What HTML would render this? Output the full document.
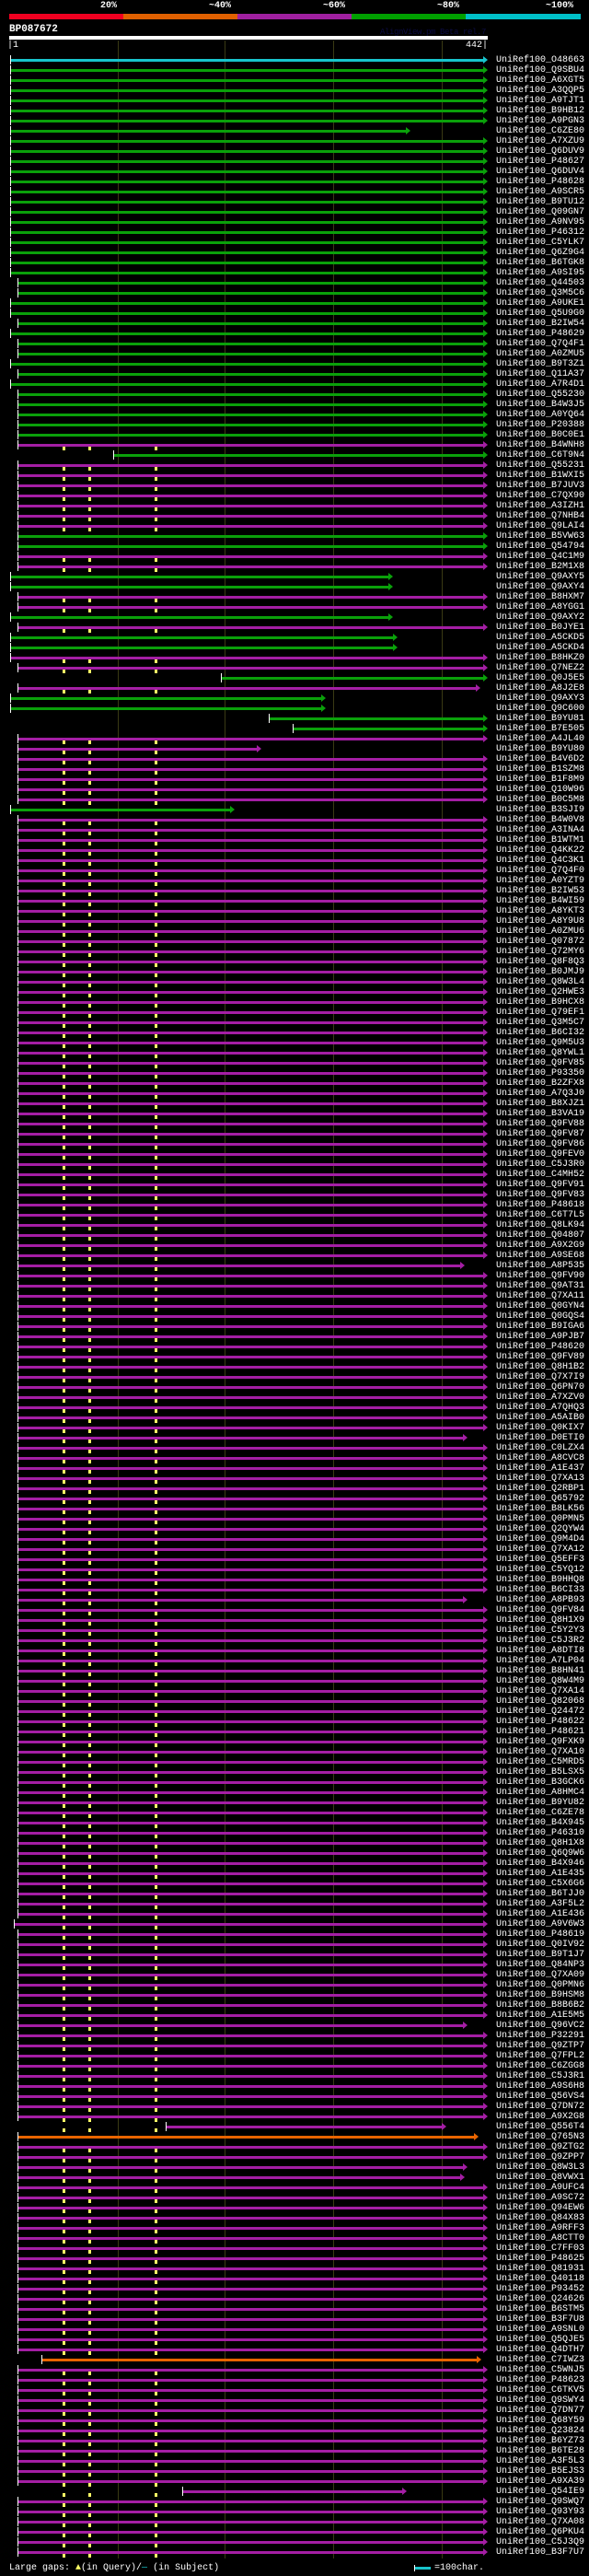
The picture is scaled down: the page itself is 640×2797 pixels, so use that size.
<!DOCTYPE html>
<html><head><meta charset="utf-8"><style>
*{margin:0;padding:0;box-sizing:border-box}
body{width:640px;height:2797px;background:#000;position:relative;overflow:hidden;font-family:"Liberation Mono",monospace;color:#fff}
.abs{position:absolute}
.pct{position:absolute;top:1px;font-size:10px;font-weight:bold;line-height:11px}
.grid{position:absolute;top:44px;height:2734px;width:1px;background:#3a3a14}
#rows{position:absolute;top:60px;left:0;width:640px}
.r{position:relative;height:11px;width:640px}
.r i{position:absolute;top:4px;height:3px;left:19px;width:506px;background:var(--c)}
.r.a i{left:11px;width:514px}
.r i::before{content:'';position:absolute;left:0;top:-4px;width:1px;height:10px;background:#fff}
.r i::after{content:'';position:absolute;left:100%;top:-3px;width:0;height:0;border-left:5px solid var(--c);border-top:4.5px solid transparent;border-bottom:4.5px solid transparent}
.r b{position:absolute;left:539px;top:0;font-weight:normal;font-size:10px;line-height:11px;white-space:pre}
.g{--c:#0aa00a}.m{--c:#a41ea4}.o{--c:#e86400}.c{--c:#18c4cc}
.m::before,.m::after,.m b::before{content:'';position:absolute;top:7px;width:3px;height:4px;background:#ffff66}
.m::before{left:68px}.m::after{left:96px}.m b::before{left:-371px;top:7px}
</style></head><body>
<div class="pct" style="left:109px">20%</div>
<div class="pct" style="left:227px">~40%</div>
<div class="pct" style="left:351px">~60%</div>
<div class="pct" style="left:475px">~80%</div>
<div class="pct" style="left:593px">~100%</div>
<div class="abs" style="left:10px;top:15px;width:124px;height:6px;background:#f00020"></div>
<div class="abs" style="left:134px;top:15px;width:124px;height:6px;background:#e06000"></div>
<div class="abs" style="left:258px;top:15px;width:124px;height:6px;background:#a020a0"></div>
<div class="abs" style="left:382px;top:15px;width:124px;height:6px;background:#00a000"></div>
<div class="abs" style="left:506px;top:15px;width:125px;height:6px;background:#00c0c8"></div>
<div class="abs" style="left:10px;top:26px;font-size:11px;font-weight:bold;line-height:12px">BP087672</div>
<div class="abs" style="left:413px;top:30px;font-size:9px;letter-spacing:-0.4px;line-height:10px;color:#0c0c44">AlignView.pm Beta rel.7</div>
<div class="abs" style="left:10px;top:39px;width:520px;height:4px;background:#fff"></div>
<div class="abs" style="left:8px;top:44px;font-size:10px;line-height:11px">|1</div>
<div class="abs" style="left:506px;top:44px;font-size:10px;line-height:11px">442|</div>
<div class="grid" style="left:128px"></div><div class="grid" style="left:244px"></div><div class="grid" style="left:362px"></div><div class="grid" style="left:480px"></div>
<div id="rows">
<div class="r c a"><i></i><b>UniRef100_O48663</b></div>
<div class="r g a"><i></i><b>UniRef100_Q9SBU4</b></div>
<div class="r g a"><i></i><b>UniRef100_A6XGT5</b></div>
<div class="r g a"><i></i><b>UniRef100_A3QQP5</b></div>
<div class="r g a"><i></i><b>UniRef100_A9TJT1</b></div>
<div class="r g a"><i></i><b>UniRef100_B9HB12</b></div>
<div class="r g a"><i></i><b>UniRef100_A9PGN3</b></div>
<div class="r g a"><i style="width:430px"></i><b>UniRef100_C6ZE80</b></div>
<div class="r g a"><i></i><b>UniRef100_A7XZU9</b></div>
<div class="r g a"><i></i><b>UniRef100_Q6DUV9</b></div>
<div class="r g a"><i></i><b>UniRef100_P48627</b></div>
<div class="r g a"><i></i><b>UniRef100_Q6DUV4</b></div>
<div class="r g a"><i></i><b>UniRef100_P48628</b></div>
<div class="r g a"><i></i><b>UniRef100_A9SCR5</b></div>
<div class="r g a"><i></i><b>UniRef100_B9TU12</b></div>
<div class="r g a"><i></i><b>UniRef100_Q09GN7</b></div>
<div class="r g a"><i></i><b>UniRef100_A9NV95</b></div>
<div class="r g a"><i></i><b>UniRef100_P46312</b></div>
<div class="r g a"><i></i><b>UniRef100_C5YLK7</b></div>
<div class="r g a"><i></i><b>UniRef100_Q6Z9G4</b></div>
<div class="r g a"><i></i><b>UniRef100_B6TGK8</b></div>
<div class="r g a"><i></i><b>UniRef100_A9SI95</b></div>
<div class="r g"><i></i><b>UniRef100_Q44503</b></div>
<div class="r g"><i></i><b>UniRef100_Q3M5C6</b></div>
<div class="r g a"><i></i><b>UniRef100_A9UKE1</b></div>
<div class="r g a"><i></i><b>UniRef100_Q5U9G0</b></div>
<div class="r g"><i></i><b>UniRef100_B2IW54</b></div>
<div class="r g a"><i></i><b>UniRef100_P48629</b></div>
<div class="r g"><i></i><b>UniRef100_Q7Q4F1</b></div>
<div class="r g"><i></i><b>UniRef100_A0ZMU5</b></div>
<div class="r g a"><i></i><b>UniRef100_B9T3Z1</b></div>
<div class="r g"><i></i><b>UniRef100_Q11A37</b></div>
<div class="r g a"><i></i><b>UniRef100_A7R4D1</b></div>
<div class="r g"><i></i><b>UniRef100_Q55230</b></div>
<div class="r g"><i></i><b>UniRef100_B4W3J5</b></div>
<div class="r g"><i></i><b>UniRef100_A0YQ64</b></div>
<div class="r g"><i></i><b>UniRef100_P20388</b></div>
<div class="r g"><i></i><b>UniRef100_B0C0E1</b></div>
<div class="r m"><i></i><b>UniRef100_B4WNH8</b></div>
<div class="r g"><i style="left:123px;width:402px"></i><b>UniRef100_C6T9N4</b></div>
<div class="r m"><i></i><b>UniRef100_Q55231</b></div>
<div class="r m"><i></i><b>UniRef100_B1WXI5</b></div>
<div class="r m"><i></i><b>UniRef100_B7JUV3</b></div>
<div class="r m"><i></i><b>UniRef100_C7QX90</b></div>
<div class="r m"><i></i><b>UniRef100_A3IZH1</b></div>
<div class="r m"><i></i><b>UniRef100_Q7NHB4</b></div>
<div class="r m"><i></i><b>UniRef100_Q9LAI4</b></div>
<div class="r g"><i></i><b>UniRef100_B5VW63</b></div>
<div class="r g"><i></i><b>UniRef100_Q54794</b></div>
<div class="r m"><i></i><b>UniRef100_Q4C1M9</b></div>
<div class="r m"><i></i><b>UniRef100_B2M1X8</b></div>
<div class="r g a"><i style="width:411px"></i><b>UniRef100_Q9AXY5</b></div>
<div class="r g a"><i style="width:411px"></i><b>UniRef100_Q9AXY4</b></div>
<div class="r m"><i></i><b>UniRef100_B8HXM7</b></div>
<div class="r m"><i></i><b>UniRef100_A8YGG1</b></div>
<div class="r g a"><i style="width:411px"></i><b>UniRef100_Q9AXY2</b></div>
<div class="r m"><i></i><b>UniRef100_B0JYE1</b></div>
<div class="r g a"><i style="width:416px"></i><b>UniRef100_A5CKD5</b></div>
<div class="r g a"><i style="width:416px"></i><b>UniRef100_A5CKD4</b></div>
<div class="r m a"><i></i><b>UniRef100_B8HKZ0</b></div>
<div class="r m"><i></i><b>UniRef100_Q7NEZ2</b></div>
<div class="r g"><i style="left:240px;width:285px"></i><b>UniRef100_Q0J5E5</b></div>
<div class="r m"><i style="width:498px"></i><b>UniRef100_A8J2E8</b></div>
<div class="r g a"><i style="width:338px"></i><b>UniRef100_Q9AXY3</b></div>
<div class="r g a"><i style="width:338px"></i><b>UniRef100_Q9C600</b></div>
<div class="r g"><i style="left:292px;width:233px"></i><b>UniRef100_B9YU81</b></div>
<div class="r g"><i style="left:318px;width:207px"></i><b>UniRef100_B7E505</b></div>
<div class="r m"><i></i><b>UniRef100_A4JL40</b></div>
<div class="r m"><i style="width:260px"></i><b>UniRef100_B9YU80</b></div>
<div class="r m"><i></i><b>UniRef100_B4V6D2</b></div>
<div class="r m"><i></i><b>UniRef100_B1SZM8</b></div>
<div class="r m"><i></i><b>UniRef100_B1F8M9</b></div>
<div class="r m"><i></i><b>UniRef100_Q10W96</b></div>
<div class="r m"><i></i><b>UniRef100_B0C5M8</b></div>
<div class="r g a"><i style="width:239px"></i><b>UniRef100_B3SJI9</b></div>
<div class="r m"><i></i><b>UniRef100_B4W0V8</b></div>
<div class="r m"><i></i><b>UniRef100_A3INA4</b></div>
<div class="r m"><i></i><b>UniRef100_B1WTM1</b></div>
<div class="r m"><i></i><b>UniRef100_Q4KK22</b></div>
<div class="r m"><i></i><b>UniRef100_Q4C3K1</b></div>
<div class="r m"><i></i><b>UniRef100_Q7Q4F0</b></div>
<div class="r m"><i></i><b>UniRef100_A0YZT9</b></div>
<div class="r m"><i></i><b>UniRef100_B2IW53</b></div>
<div class="r m"><i></i><b>UniRef100_B4WI59</b></div>
<div class="r m"><i></i><b>UniRef100_A8YKT3</b></div>
<div class="r m"><i></i><b>UniRef100_A8Y9U8</b></div>
<div class="r m"><i></i><b>UniRef100_A0ZMU6</b></div>
<div class="r m"><i></i><b>UniRef100_Q07872</b></div>
<div class="r m"><i></i><b>UniRef100_Q72MY6</b></div>
<div class="r m"><i></i><b>UniRef100_Q8F8Q3</b></div>
<div class="r m"><i></i><b>UniRef100_B0JMJ9</b></div>
<div class="r m"><i></i><b>UniRef100_Q8W3L4</b></div>
<div class="r m"><i></i><b>UniRef100_Q2HWE3</b></div>
<div class="r m"><i></i><b>UniRef100_B9HCX8</b></div>
<div class="r m"><i></i><b>UniRef100_Q79EF1</b></div>
<div class="r m"><i></i><b>UniRef100_Q3M5C7</b></div>
<div class="r m"><i></i><b>UniRef100_B6CI32</b></div>
<div class="r m"><i></i><b>UniRef100_Q9M5U3</b></div>
<div class="r m"><i></i><b>UniRef100_Q8YWL1</b></div>
<div class="r m"><i></i><b>UniRef100_Q9FV85</b></div>
<div class="r m"><i></i><b>UniRef100_P93350</b></div>
<div class="r m"><i></i><b>UniRef100_B2ZFX8</b></div>
<div class="r m"><i></i><b>UniRef100_A7Q3J0</b></div>
<div class="r m"><i></i><b>UniRef100_B8XJZ1</b></div>
<div class="r m"><i></i><b>UniRef100_B3VA19</b></div>
<div class="r m"><i></i><b>UniRef100_Q9FV88</b></div>
<div class="r m"><i></i><b>UniRef100_Q9FV87</b></div>
<div class="r m"><i></i><b>UniRef100_Q9FV86</b></div>
<div class="r m"><i></i><b>UniRef100_Q9FEV0</b></div>
<div class="r m"><i></i><b>UniRef100_C5J3R0</b></div>
<div class="r m"><i></i><b>UniRef100_C4MH52</b></div>
<div class="r m"><i></i><b>UniRef100_Q9FV91</b></div>
<div class="r m"><i></i><b>UniRef100_Q9FV83</b></div>
<div class="r m"><i></i><b>UniRef100_P48618</b></div>
<div class="r m"><i></i><b>UniRef100_C6T7L5</b></div>
<div class="r m"><i></i><b>UniRef100_Q8LK94</b></div>
<div class="r m"><i></i><b>UniRef100_Q04807</b></div>
<div class="r m"><i></i><b>UniRef100_A9X2G9</b></div>
<div class="r m"><i></i><b>UniRef100_A9SE68</b></div>
<div class="r m"><i style="width:481px"></i><b>UniRef100_A8P535</b></div>
<div class="r m"><i></i><b>UniRef100_Q9FV90</b></div>
<div class="r m"><i></i><b>UniRef100_Q9AT31</b></div>
<div class="r m"><i></i><b>UniRef100_Q7XA11</b></div>
<div class="r m"><i></i><b>UniRef100_Q0GYN4</b></div>
<div class="r m"><i></i><b>UniRef100_Q0GQS4</b></div>
<div class="r m"><i></i><b>UniRef100_B9IGA6</b></div>
<div class="r m"><i></i><b>UniRef100_A9PJB7</b></div>
<div class="r m"><i></i><b>UniRef100_P48620</b></div>
<div class="r m"><i></i><b>UniRef100_Q9FV89</b></div>
<div class="r m"><i></i><b>UniRef100_Q8H1B2</b></div>
<div class="r m"><i></i><b>UniRef100_Q7X7I9</b></div>
<div class="r m"><i></i><b>UniRef100_Q6PN70</b></div>
<div class="r m"><i></i><b>UniRef100_A7XZV0</b></div>
<div class="r m"><i></i><b>UniRef100_A7QHQ3</b></div>
<div class="r m"><i></i><b>UniRef100_A5AIB0</b></div>
<div class="r m"><i></i><b>UniRef100_Q0KIX7</b></div>
<div class="r m"><i style="width:484px"></i><b>UniRef100_D0ETI0</b></div>
<div class="r m"><i></i><b>UniRef100_C0LZX4</b></div>
<div class="r m"><i></i><b>UniRef100_A8CVC8</b></div>
<div class="r m"><i></i><b>UniRef100_A1E437</b></div>
<div class="r m"><i></i><b>UniRef100_Q7XA13</b></div>
<div class="r m"><i></i><b>UniRef100_Q2RBP1</b></div>
<div class="r m"><i></i><b>UniRef100_Q65792</b></div>
<div class="r m"><i></i><b>UniRef100_B8LK56</b></div>
<div class="r m"><i></i><b>UniRef100_Q0PMN5</b></div>
<div class="r m"><i></i><b>UniRef100_Q2QYW4</b></div>
<div class="r m"><i></i><b>UniRef100_Q9M4D4</b></div>
<div class="r m"><i></i><b>UniRef100_Q7XA12</b></div>
<div class="r m"><i></i><b>UniRef100_Q5EFF3</b></div>
<div class="r m"><i></i><b>UniRef100_C5YQ12</b></div>
<div class="r m"><i></i><b>UniRef100_B9HHQ8</b></div>
<div class="r m"><i></i><b>UniRef100_B6CI33</b></div>
<div class="r m"><i style="width:484px"></i><b>UniRef100_A8PB93</b></div>
<div class="r m"><i></i><b>UniRef100_Q9FV84</b></div>
<div class="r m"><i></i><b>UniRef100_Q8H1X9</b></div>
<div class="r m"><i></i><b>UniRef100_C5Y2Y3</b></div>
<div class="r m"><i></i><b>UniRef100_C5J3R2</b></div>
<div class="r m"><i></i><b>UniRef100_A8DTI8</b></div>
<div class="r m"><i></i><b>UniRef100_A7LP04</b></div>
<div class="r m"><i></i><b>UniRef100_B8HN41</b></div>
<div class="r m"><i></i><b>UniRef100_Q8W4M9</b></div>
<div class="r m"><i></i><b>UniRef100_Q7XA14</b></div>
<div class="r m"><i></i><b>UniRef100_Q82068</b></div>
<div class="r m"><i></i><b>UniRef100_Q24472</b></div>
<div class="r m"><i></i><b>UniRef100_P48622</b></div>
<div class="r m"><i></i><b>UniRef100_P48621</b></div>
<div class="r m"><i></i><b>UniRef100_Q9FXK9</b></div>
<div class="r m"><i></i><b>UniRef100_Q7XA10</b></div>
<div class="r m"><i></i><b>UniRef100_C5MRD5</b></div>
<div class="r m"><i></i><b>UniRef100_B5LSX5</b></div>
<div class="r m"><i></i><b>UniRef100_B3GCK6</b></div>
<div class="r m"><i></i><b>UniRef100_A8HMC4</b></div>
<div class="r m"><i></i><b>UniRef100_B9YU82</b></div>
<div class="r m"><i></i><b>UniRef100_C6ZE78</b></div>
<div class="r m"><i></i><b>UniRef100_B4X945</b></div>
<div class="r m"><i></i><b>UniRef100_P46310</b></div>
<div class="r m"><i></i><b>UniRef100_Q8H1X8</b></div>
<div class="r m"><i></i><b>UniRef100_Q6Q9W6</b></div>
<div class="r m"><i></i><b>UniRef100_B4X946</b></div>
<div class="r m"><i></i><b>UniRef100_A1E435</b></div>
<div class="r m"><i></i><b>UniRef100_C5X6G6</b></div>
<div class="r m"><i></i><b>UniRef100_B6TJJ0</b></div>
<div class="r m"><i></i><b>UniRef100_A3F5L2</b></div>
<div class="r m"><i></i><b>UniRef100_A1E436</b></div>
<div class="r m"><i style="left:15px;width:510px"></i><b>UniRef100_A9V6W3</b></div>
<div class="r m"><i></i><b>UniRef100_P48619</b></div>
<div class="r m"><i></i><b>UniRef100_Q0IV92</b></div>
<div class="r m"><i></i><b>UniRef100_B9T1J7</b></div>
<div class="r m"><i></i><b>UniRef100_Q84NP3</b></div>
<div class="r m"><i></i><b>UniRef100_Q7XA09</b></div>
<div class="r m"><i></i><b>UniRef100_Q0PMN6</b></div>
<div class="r m"><i></i><b>UniRef100_B9HSM8</b></div>
<div class="r m"><i></i><b>UniRef100_B8B6B2</b></div>
<div class="r m"><i></i><b>UniRef100_A1E5M5</b></div>
<div class="r m"><i style="width:484px"></i><b>UniRef100_Q96VC2</b></div>
<div class="r m"><i></i><b>UniRef100_P32291</b></div>
<div class="r m"><i></i><b>UniRef100_Q9ZTP7</b></div>
<div class="r m"><i></i><b>UniRef100_Q7FPL2</b></div>
<div class="r m"><i></i><b>UniRef100_C6ZGG8</b></div>
<div class="r m"><i></i><b>UniRef100_C5J3R1</b></div>
<div class="r m"><i></i><b>UniRef100_A9S6H8</b></div>
<div class="r m"><i></i><b>UniRef100_Q56VS4</b></div>
<div class="r m"><i></i><b>UniRef100_Q7DN72</b></div>
<div class="r m"><i></i><b>UniRef100_A9X2G8</b></div>
<div class="r m"><i style="left:180px;width:300px"></i><b>UniRef100_Q556T4</b></div>
<div class="r o"><i style="width:496px"></i><b>UniRef100_Q765N3</b></div>
<div class="r m"><i></i><b>UniRef100_Q9ZTG2</b></div>
<div class="r m"><i></i><b>UniRef100_Q9ZPP7</b></div>
<div class="r m"><i style="width:484px"></i><b>UniRef100_Q8W3L3</b></div>
<div class="r m"><i style="width:481px"></i><b>UniRef100_Q8VWX1</b></div>
<div class="r m"><i></i><b>UniRef100_A9UFC4</b></div>
<div class="r m"><i></i><b>UniRef100_A9SC72</b></div>
<div class="r m"><i></i><b>UniRef100_Q94EW6</b></div>
<div class="r m"><i></i><b>UniRef100_Q84X83</b></div>
<div class="r m"><i></i><b>UniRef100_A9RFF3</b></div>
<div class="r m"><i></i><b>UniRef100_A8CTT0</b></div>
<div class="r m"><i></i><b>UniRef100_C7FF03</b></div>
<div class="r m"><i></i><b>UniRef100_P48625</b></div>
<div class="r m"><i></i><b>UniRef100_Q81931</b></div>
<div class="r m"><i></i><b>UniRef100_Q40118</b></div>
<div class="r m"><i></i><b>UniRef100_P93452</b></div>
<div class="r m"><i></i><b>UniRef100_Q24626</b></div>
<div class="r m"><i></i><b>UniRef100_B6STM5</b></div>
<div class="r m"><i></i><b>UniRef100_B3F7U8</b></div>
<div class="r m"><i></i><b>UniRef100_A9SNL0</b></div>
<div class="r m"><i></i><b>UniRef100_Q5QJE5</b></div>
<div class="r m"><i></i><b>UniRef100_Q4DTH7</b></div>
<div class="r o"><i style="left:45px;width:473px"></i><b>UniRef100_C7IWZ3</b></div>
<div class="r m"><i></i><b>UniRef100_C5WNJ5</b></div>
<div class="r m"><i></i><b>UniRef100_P48623</b></div>
<div class="r m"><i></i><b>UniRef100_C6TKV5</b></div>
<div class="r m"><i></i><b>UniRef100_Q9SWY4</b></div>
<div class="r m"><i></i><b>UniRef100_Q7DN77</b></div>
<div class="r m"><i></i><b>UniRef100_Q68Y59</b></div>
<div class="r m"><i></i><b>UniRef100_Q23824</b></div>
<div class="r m"><i></i><b>UniRef100_B6YZ73</b></div>
<div class="r m"><i></i><b>UniRef100_B6TE28</b></div>
<div class="r m"><i></i><b>UniRef100_A3F5L3</b></div>
<div class="r m"><i></i><b>UniRef100_B5EJS3</b></div>
<div class="r m"><i></i><b>UniRef100_A9XA39</b></div>
<div class="r m"><i style="left:198px;width:239px"></i><b>UniRef100_Q54IE9</b></div>
<div class="r m"><i></i><b>UniRef100_Q9SWQ7</b></div>
<div class="r m"><i></i><b>UniRef100_Q93Y93</b></div>
<div class="r m"><i></i><b>UniRef100_Q7XA08</b></div>
<div class="r m"><i></i><b>UniRef100_Q6PKU4</b></div>
<div class="r m"><i></i><b>UniRef100_C5J3Q9</b></div>
<div class="r m"><i></i><b>UniRef100_B3F7U7</b></div>
</div>
<div class="abs" style="left:10px;top:2783px;font-size:10px;line-height:11px;white-space:pre">Large gaps: <span style="color:#ffff66">▲</span>(in Query)/<span style="color:#18c4cc">—</span> (in Subject)</div>
<div class="abs" style="left:450px;top:2787px;width:18px;height:3px;background:#18c4cc"></div>
<div class="abs" style="left:450px;top:2785px;width:1px;height:7px;background:#fff"></div>
<div class="abs" style="left:472px;top:2783px;font-size:10px;line-height:11px">=100char.</div>
</body></html>
